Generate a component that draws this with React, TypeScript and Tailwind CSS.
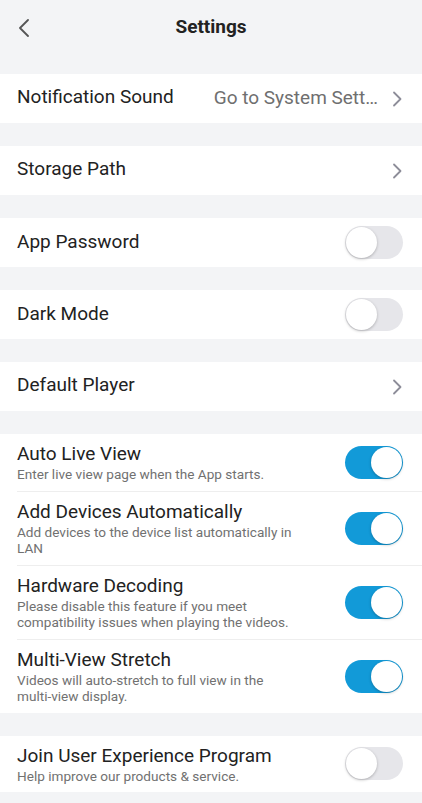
import React from "react";

const Chevron = () => (
  <svg width="10" height="16" viewBox="0 0 10 16" className="shrink-0">
    <path d="M2 1.5 L8.5 8 L2 14.5" fill="none" stroke="#8d8d99" strokeWidth="1.8" strokeLinecap="round" strokeLinejoin="round" />
  </svg>
);

const Toggle = ({ on }: { on: boolean }) => (
  <div
    className={`relative shrink-0 w-[58px] h-[33px] rounded-full ${on ? "bg-[#129ad8]" : "bg-[#e6e6ea]"}`}
  >
    <div
      className={`absolute top-[1px] w-[31px] h-[31px] rounded-full bg-white shadow-[0_1px_3px_rgba(0,0,0,0.25)] ${on ? "left-[26px]" : "left-[1px]"}`}
    />
  </div>
);

const Gap = () => <div className="h-[23px]" />;

const NavRow = ({ label, value }: { label: string; value?: string }) => (
  <div className="h-[49px] bg-white flex items-center pl-[17px] pr-[20px]">
    <span className="text-[19px] text-[#222] flex-1 -mt-[2px]">{label}</span>
    {value && <span className="text-[19px] text-[#6f6f6f] mr-[14px]">{value}</span>}
    <Chevron />
  </div>
);

const ToggleRow = ({ label, on }: { label: string; on: boolean }) => (
  <div className="h-[49px] bg-white flex items-center pl-[17px] pr-[19px]">
    <span className="text-[19px] text-[#222] flex-1">{label}</span>
    <Toggle on={on} />
  </div>
);

const DescRow = ({ label, desc, on, divider }: { label: string; desc: React.ReactNode; on: boolean; divider?: boolean }) => (
  <div className="bg-white pl-[17px]">
    <div className={`flex items-center pr-[19px] py-[8px] ${divider ? "border-b border-[#eeeeee]" : ""}`}>
      <div className="flex-1 pr-[40px]">
        <div className="text-[19px] leading-[24px] text-[#222]">{label}</div>
        <div className="text-[13.6px] leading-[16.5px] text-[#717171]">{desc}</div>
      </div>
      <Toggle on={on} />
    </div>
  </div>
);

export default function App() {
  return (
    <div className="min-h-[803px] bg-[#f3f4f6] font-['Roboto',sans-serif]">
      <div className="h-[51px] relative flex items-center justify-center">
        <svg width="12" height="18" viewBox="0 0 12 18" className="absolute left-[18px] top-[19px]">
          <path d="M10 1 L2 9 L10 17" fill="none" stroke="#555" strokeWidth="1.8" strokeLinecap="round" strokeLinejoin="round" />
        </svg>
        <span className="text-[19px] font-bold text-[#222] mt-[3px]">Settings</span>
      </div>
      <Gap />
      <NavRow label="Notification Sound" value="Go to System Sett…" />
      <Gap />
      <NavRow label="Storage Path" />
      <Gap />
      <ToggleRow label="App Password" on={false} />
      <Gap />
      <ToggleRow label="Dark Mode" on={false} />
      <Gap />
      <NavRow label="Default Player" />
      <Gap />
      <DescRow label="Auto Live View" desc="Enter live view page when the App starts." on divider />
      <DescRow label="Add Devices Automatically" desc="Add devices to the device list automatically in LAN" on divider />
      <DescRow label="Hardware Decoding" desc="Please disable this feature if you meet compatibility issues when playing the videos." on divider />
      <DescRow
        label="Multi-View Stretch"
        desc={
          <>
            Videos will auto-stretch to full view in the <span className="whitespace-nowrap">multi-view</span> display.
          </>
        }
        on
      />
      <Gap />
      <DescRow label="Join User Experience Program" desc="Help improve our products & service." on={false} />
    </div>
  );
}
